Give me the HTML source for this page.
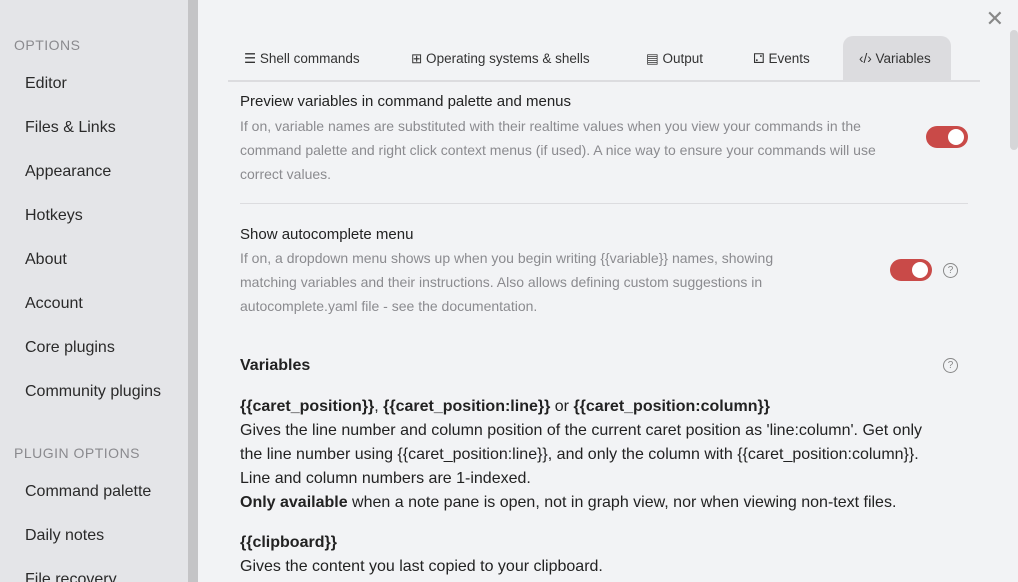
<!DOCTYPE html>
<html><head><style>
*{margin:0;padding:0;box-sizing:border-box}
body{width:1018px;height:582px;overflow:hidden;background:#f2f3f5;font-family:"Liberation Sans",sans-serif;color:#222;position:relative}
.side{position:absolute;left:0;top:0;width:188px;height:582px;background:#e4e5e8;overflow:hidden}
.bar{position:absolute;left:188px;top:0;width:10px;height:582px;background:#c4c4c6}
.h{position:absolute;left:14px;font-size:14px;color:#8a8a8e;letter-spacing:.5px}
.it{position:absolute;left:25px;font-size:16px;color:#2a2a2a}
.main{position:absolute;left:198px;top:0;right:0;bottom:0;overflow:hidden}
.tabs{position:absolute;left:30px;top:36px;width:752px;height:46px;border-bottom:2px solid #dcdcdf}
.tab{position:absolute;top:15px;font-size:13.5px;color:#333}
.act{position:absolute;left:615px;top:0;width:108px;height:46px;background:#dcdcdf;border-radius:10px 10px 0 0}
.t{position:absolute;left:42px;font-size:15px;color:#222}
.d{position:absolute;left:42px;width:668px;font-size:14px;line-height:24px;color:#8b8b8f}
.tg{position:absolute;width:42px;height:22px;border-radius:11px;background:#c94a48}
.tg::after{content:"";position:absolute;right:4px;top:3px;width:16px;height:16px;border-radius:50%;background:#fff}
.q{position:absolute;width:15px;height:15px;border:1.2px solid #888;border-radius:50%;font-size:10px;color:#888;text-align:center;line-height:13px}
.b{position:absolute;left:42px;width:770px;font-size:16px;line-height:24px;color:#222;white-space:nowrap}
</style></head><body>
<div class="side">
<div class="h" style="top:37px">OPTIONS</div>
<div class="it" style="top:75px">Editor</div>
<div class="it" style="top:119px">Files &amp; Links</div>
<div class="it" style="top:163px">Appearance</div>
<div class="it" style="top:207px">Hotkeys</div>
<div class="it" style="top:251px">About</div>
<div class="it" style="top:295px">Account</div>
<div class="it" style="top:339px">Core plugins</div>
<div class="it" style="top:383px">Community plugins</div>
<div class="h" style="top:445px">PLUGIN OPTIONS</div>
<div class="it" style="top:483px">Command palette</div>
<div class="it" style="top:527px">Daily notes</div>
<div class="it" style="top:571px">File recovery</div>
</div>
<div class="bar"></div>
<div class="main">
<div style="position:absolute;right:14px;top:6px;font-size:22px;color:#888">✕</div>
<div style="position:absolute;left:812px;top:30px;width:8px;height:120px;background:#d6d6d8;border-radius:4px"></div>
<div class="tabs">
<div class="act"></div>
<div class="tab" style="left:16px">☰ Shell commands</div>
<div class="tab" style="left:183px">⊞ Operating systems &amp; shells</div>
<div class="tab" style="left:418px">▤ Output</div>
<div class="tab" style="left:525px">⚁ Events</div>
<div class="tab" style="left:631px">‹/› Variables</div>
</div>
<div class="t" style="top:93px">Preview variables in command palette and menus</div>
<div class="d" style="top:114px">If on, variable names are substituted with their realtime values when you view your commands in the command palette and right click context menus (if used). A nice way to ensure your commands will use correct values.</div>
<div class="tg" style="left:728px;top:126px"></div>
<div style="position:absolute;left:42px;top:203px;width:728px;height:1px;background:#dcdcdf"></div>
<div class="t" style="top:226px">Show autocomplete menu</div>
<div class="d" style="top:246px;width:575px">If on, a dropdown menu shows up when you begin writing {{variable}} names, showing matching variables and their instructions. Also allows defining custom suggestions in autocomplete.yaml file - see the documentation.</div>
<div class="tg" style="left:692px;top:259px"></div>
<div class="q" style="left:745px;top:263px">?</div>
<div class="t" style="top:357px;font-weight:bold;font-size:16px">Variables</div>
<div class="q" style="left:745px;top:358px">?</div>
<div class="b" style="top:395px"><b>{{caret_position}}</b>, <b>{{caret_position:line}}</b> or <b>{{caret_position:column}}</b><br>Gives the line number and column position of the current caret position as 'line:column'. Get only<br>the line number using {{caret_position:line}}, and only the column with {{caret_position:column}}.<br>Line and column numbers are 1-indexed.<br><b>Only available</b> when a note pane is open, not in graph view, nor when viewing non-text files.</div>
<div class="b" style="top:531px"><b>{{clipboard}}</b><br>Gives the content you last copied to your clipboard.</div>
</div>
</body></html>
